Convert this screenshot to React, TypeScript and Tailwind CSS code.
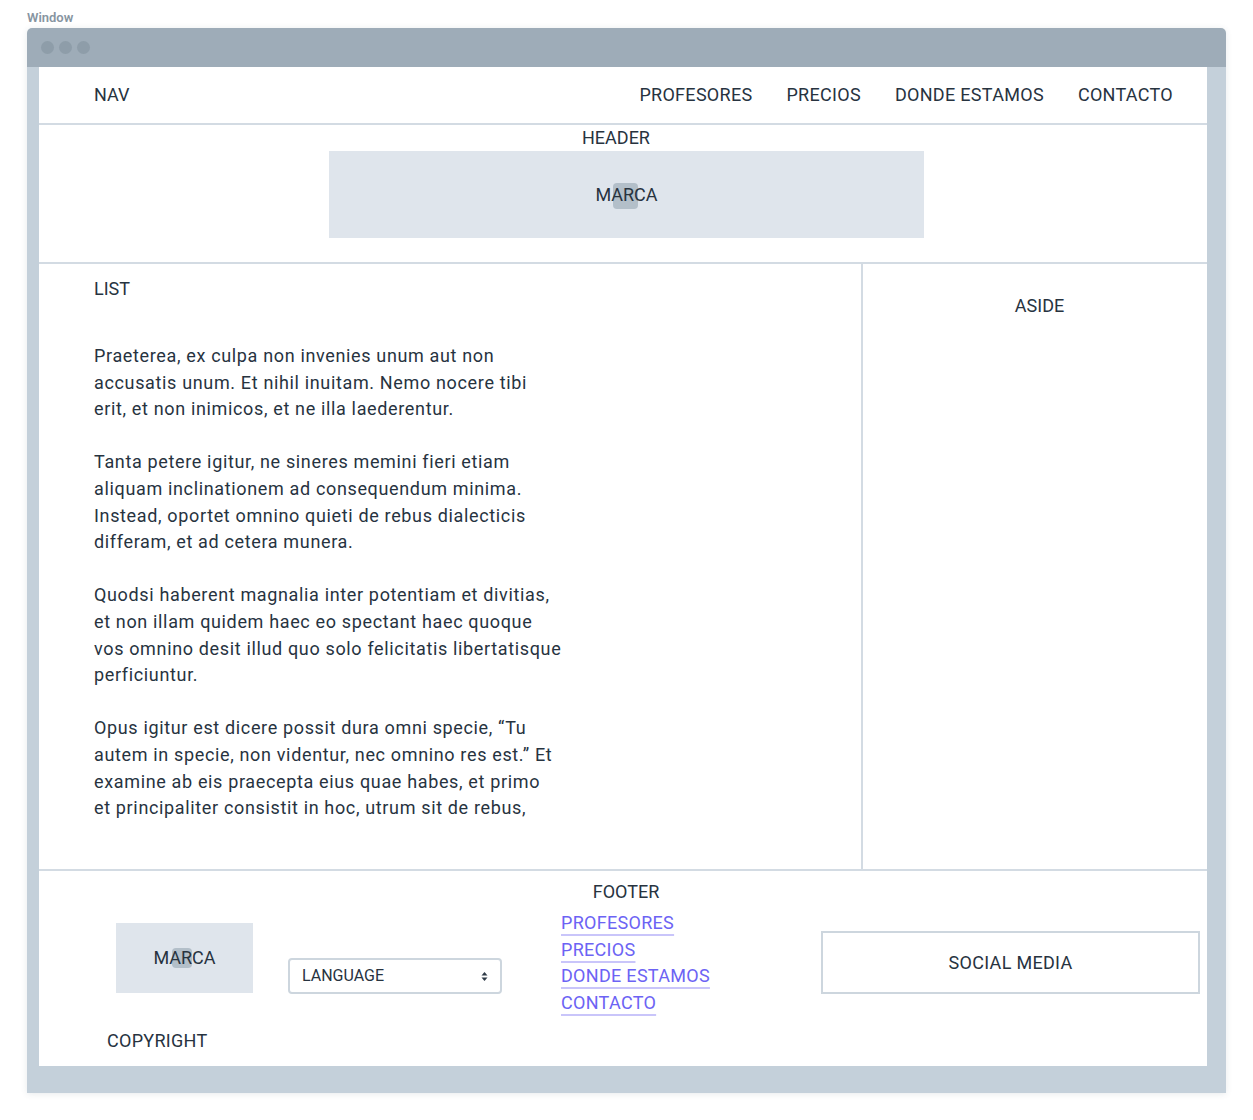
import { useState } from 'react';

const navLinks = ['PROFESORES', 'PRECIOS', 'DONDE ESTAMOS', 'CONTACTO'];

// lines kept as in the mockup so the wrap doesn't depend on the font
const paragraphs = [
  [
    'Praeterea, ex culpa non invenies unum aut non',
    'accusatis unum. Et nihil inuitam. Nemo nocere tibi',
    'erit, et non inimicos, et ne illa laederentur.',
  ],
  [
    'Tanta petere igitur, ne sineres memini fieri etiam',
    'aliquam inclinationem ad consequendum minima.',
    'Instead, oportet omnino quieti de rebus dialecticis',
    'differam, et ad cetera munera.',
  ],
  [
    'Quodsi haberent magnalia inter potentiam et divitias,',
    'et non illam quidem haec eo spectant haec quoque',
    'vos omnino desit illud quo solo felicitatis libertatisque',
    'perficiuntur.',
  ],
  [
    'Opus igitur est dicere possit dura omni specie, \u201cTu',
    'autem in specie, non videntur, nec omnino res est.\u201d Et',
    'examine ab eis praecepta eius quae habes, et primo',
    'et principaliter consistit in hoc, utrum sit de rebus,',
  ],
];

// the little image placeholder that sits behind "MARCA"
function Brand({ small }: { small?: boolean }) {
  return (
    <span className="relative inline-block">
      {small ? (
        <span className="absolute left-[19px] top-[3px] w-[20px] h-[20px] rounded-[4px] bg-[#a7b5c1]/80" />
      ) : (
        <span className="absolute left-[18px] top-[1px] w-[25px] h-[26px] rounded-[4px] bg-[#a7b5c1]/80" />
      )}
      <span className="relative">MARCA</span>
    </span>
  );
}

function SelectArrows() {
  return (
    <svg width="7" height="11" viewBox="0 0 7 11" className="text-[#2f3b47]">
      <path d="M3.5 1 L6.5 4.5 L0.5 4.5 Z" fill="currentColor" />
      <path d="M3.5 10 L6.5 6.5 L0.5 6.5 Z" fill="currentColor" />
    </svg>
  );
}

export default function App() {
  const [lang, setLang] = useState('LANGUAGE');

  return (
    <div className="min-h-screen bg-white pl-[27px] pr-[27px] pt-[10px] text-[#27333f] font-['Roboto','Liberation_Sans',sans-serif]">
      <div className="text-[13px] leading-[16px] font-semibold text-[#8795a1]">Window</div>

      {/* Window */}
      <div className="mt-[2px] w-[1199px] rounded-t-[5px] overflow-hidden shadow-[0_1px_6px_rgba(60,80,100,0.12)]">
        {/* Title bar */}
        <div className="h-[39px] bg-[#9eacb8] flex items-center gap-[5px] pl-[14px]">
          <span className="w-[13px] h-[13px] rounded-full bg-[#8e9da9]" />
          <span className="w-[13px] h-[13px] rounded-full bg-[#8e9da9]" />
          <span className="w-[13px] h-[13px] rounded-full bg-[#8e9da9]" />
        </div>

        <div className="bg-[#c4d0da] pl-[12px] pr-[19px] pb-[27px]">
          <div className="bg-white text-[18px] leading-[26px]">
            {/* Nav */}
            <nav className="h-[58px] border-b-2 border-[#d3dbe3] flex items-center pl-[55px] pr-[34px]">
              <span>NAV</span>
              <ul className="ml-auto flex gap-[34px] tracking-[0.3px]">
                {navLinks.map((l) => (
                  <li key={l}>{l}</li>
                ))}
              </ul>
            </nav>

            {/* Header */}
            <header className="border-b-2 border-[#d3dbe3] pb-[24px]">
              <div className="text-center pr-[14px]">HEADER</div>
              <div className="ml-[290px] w-[595px] h-[87px] bg-[#dfe5ec] flex items-center justify-center">
                <Brand />
              </div>
            </header>

            {/* Main */}
            <div className="flex border-b-2 border-[#d3dbe3] h-[607px]">
              <section className="w-[824px] border-r-2 border-[#d3dbe3] pl-[55px] pt-[12px]">
                <div>LIST</div>
                <div className="mt-[41px] leading-[26.6px] tracking-[0.65px] whitespace-nowrap">
                  {paragraphs.map((lines, i) => (
                    <p key={i} className="mb-[26.6px]">
                      {lines.map((line, j) => (
                        <span key={j} className="block">
                          {line}
                        </span>
                      ))}
                    </p>
                  ))}
                </div>
              </section>
              <aside className="flex-1 pt-[29px] text-center pl-[9px]">ASIDE</aside>
            </div>

            {/* Footer */}
            <footer className="pt-[8px] pb-[12px]">
              <div className="text-center pl-[6px]">FOOTER</div>
              <div className="mt-[5px] flex items-start">
                <div className="ml-[77px] w-[137px]">
                  <div className="mt-[13px] h-[70px] bg-[#dfe5ec] flex items-center justify-center">
                    <Brand small />
                  </div>
                  <div className="mt-[35px] -ml-[9px] tracking-[0.3px]">COPYRIGHT</div>
                </div>

                <label className="ml-[35px] mt-[48px] w-[214px] h-[36px] border-2 border-[#cdd6de] rounded-[4px] flex items-center pl-[12px] pr-[12px] text-[16px]">
                  <select
                    value={lang}
                    onChange={(e) => setLang(e.target.value)}
                    className="appearance-none bg-transparent outline-none flex-1"
                  >
                    <option>LANGUAGE</option>
                    <option>ESPAÑOL</option>
                    <option>ENGLISH</option>
                  </select>
                  <SelectArrows />
                </label>

                <ul className="ml-[59px] flex flex-col leading-[26.6px] text-[#6c63f4] tracking-[0.3px]">
                  {navLinks.map((l) => (
                    <li key={l}>
                      <a href="#" className="underline decoration-2 underline-offset-[5px] decoration-[#c9c5fa]">
                        {l}
                      </a>
                    </li>
                  ))}
                </ul>

                <div className="ml-auto mr-[7px] mt-[21px] w-[379px] h-[63px] border-2 border-[#cdd6de] flex items-center justify-center tracking-[0.3px]">
                  SOCIAL MEDIA
                </div>
              </div>
            </footer>
          </div>
        </div>
      </div>
    </div>
  );
}
